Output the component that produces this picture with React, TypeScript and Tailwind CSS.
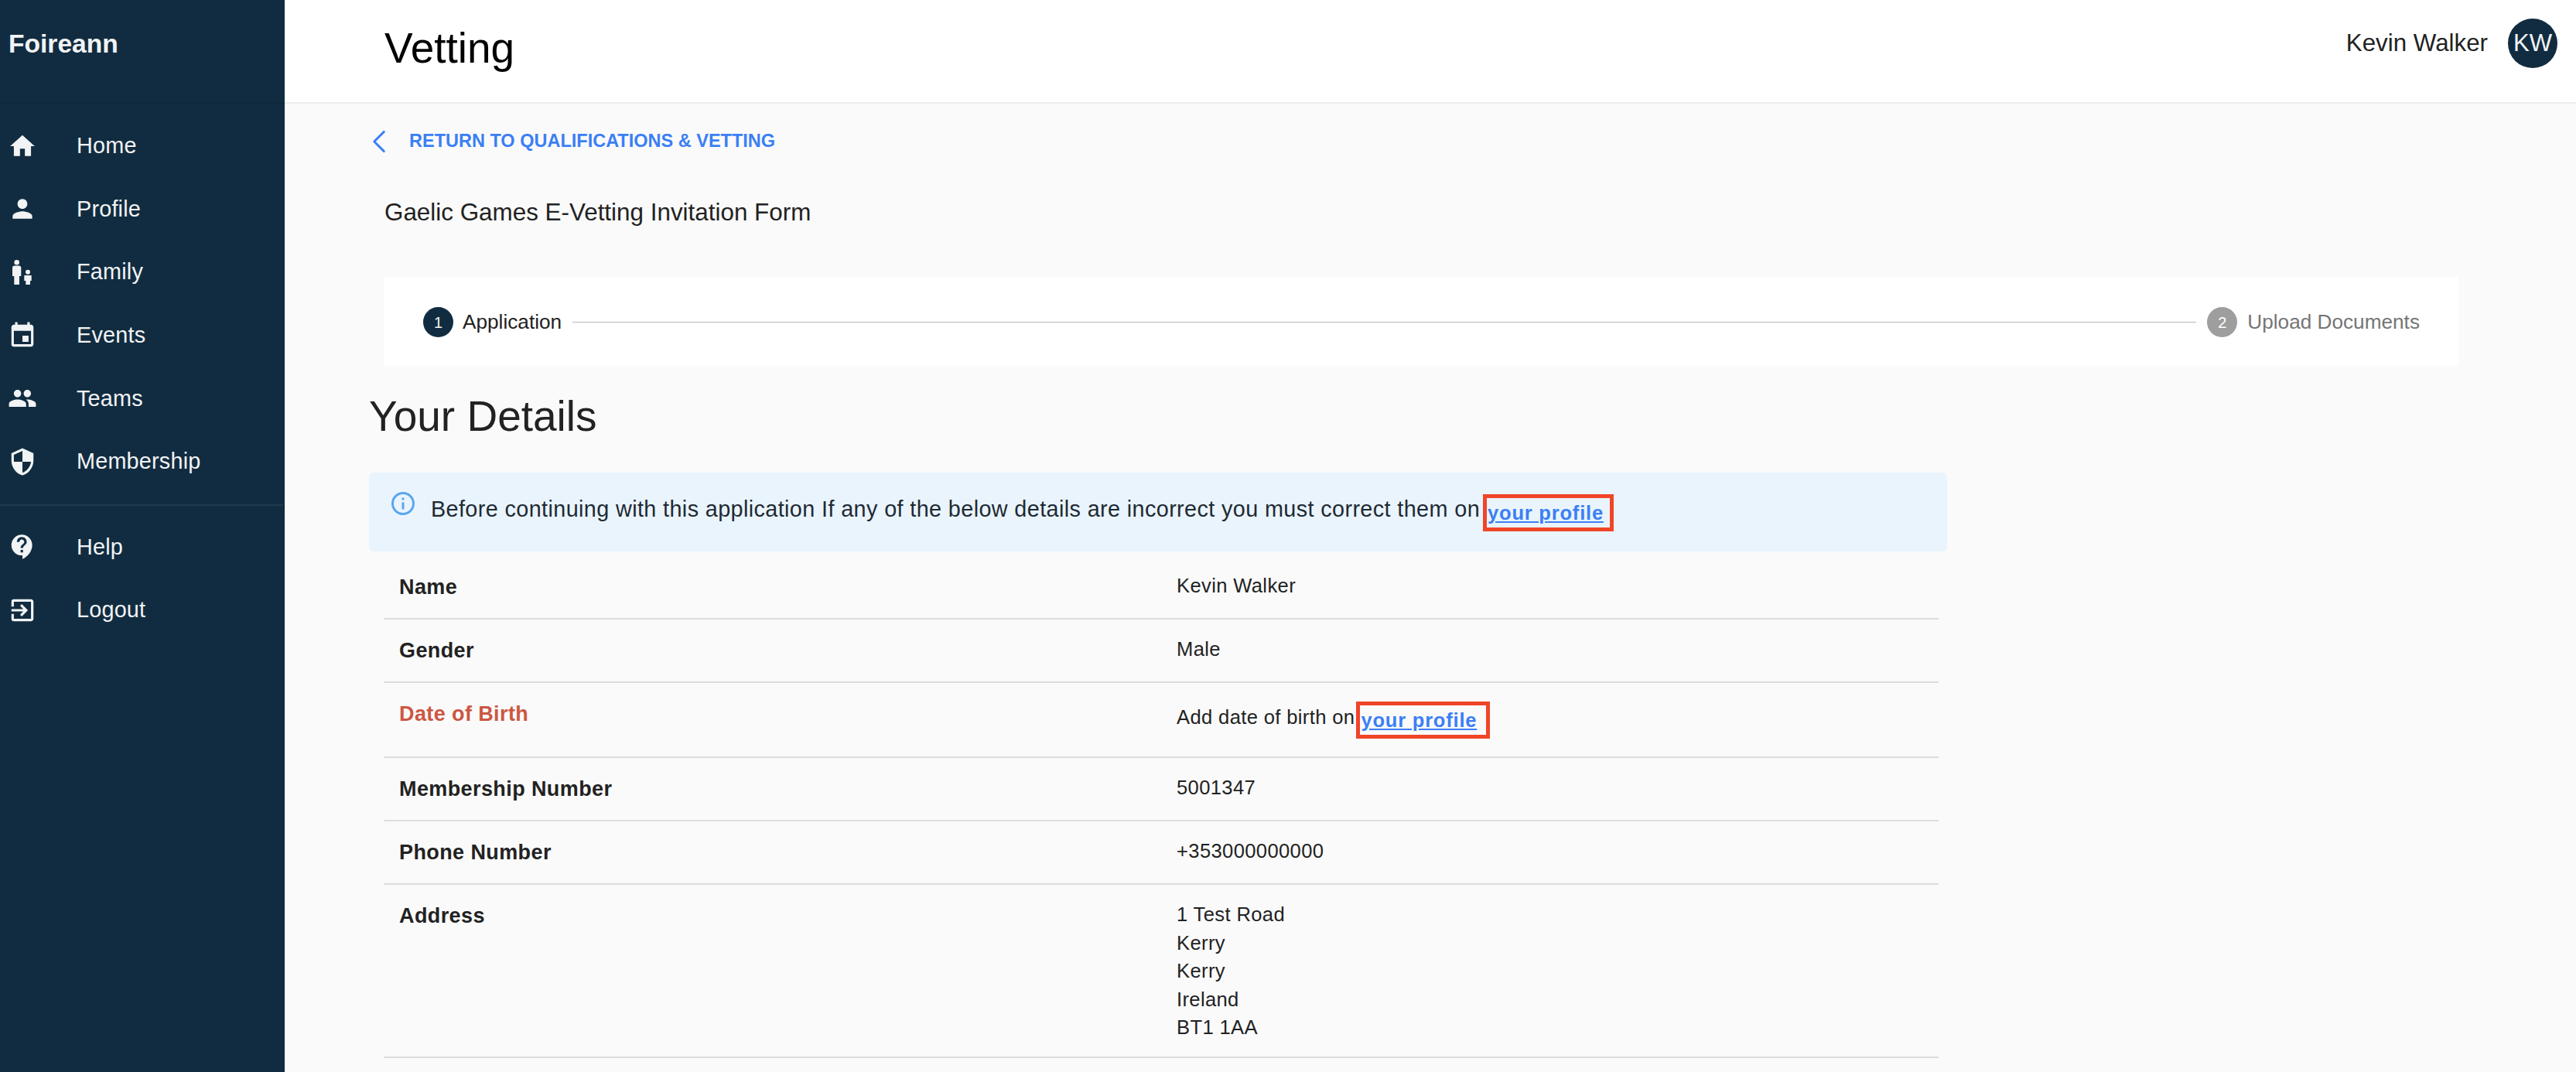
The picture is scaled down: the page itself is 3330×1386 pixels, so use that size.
import type { ComponentType, ReactNode } from "react";
import { ChevronLeft } from "lucide-react";
import {
  MdContactSupport,
  MdEvent,
  MdExitToApp,
  MdHome,
  MdInfoOutline,
  MdPeople,
  MdPerson,
  MdSecurity,
} from "react-icons/md";

function FamilyIcon({ className }: { className?: string }) {
  return (
    <svg viewBox="0 0 38 38" fill="currentColor" className={className}>
      <circle cx="11.7" cy="6.3" r="3.3" />
      <path d="M9 10.5h5.3a3 3 0 0 1 3 3V24H15v11H8.3V24H6V13.5a3 3 0 0 1 3-3z" />
      <circle cx="26" cy="18.7" r="3" />
      <path d="M21.3 23h9.4v7H29v5h-5.7v-5h-2z" />
    </svg>
  );
}

const mainNav = [
  { label: "Home", icon: MdHome },
  { label: "Profile", icon: MdPerson },
  { label: "Family", icon: FamilyIcon },
  { label: "Events", icon: MdEvent },
  { label: "Teams", icon: MdPeople },
  { label: "Membership", icon: MdSecurity },
];

const otherNav = [
  { label: "Help", icon: MdContactSupport },
  { label: "Logout", icon: MdExitToApp },
];

function NavItem({ label, icon: Icon }: { label: string; icon: ComponentType<{ className?: string }> }) {
  return (
    <div className="flex h-[81.6px] items-center pl-[10px] text-[28.8px] tracking-[0.2px] text-[#f1f3f5]">
      <Icon className="w-[38px] h-[38px] shrink-0" />
      <span className="ml-[51px]">{label}</span>
    </div>
  );
}

function ProfileLink({ className }: { className: string }) {
  return (
    <a className={`inline-block align-[-4px] border-[5px] border-[#f04528] pl-[1px] text-[#3b7ff5] font-bold text-[25.5px] leading-[38px] tracking-[0.8px] underline ${className}`}>
      your profile
    </a>
  );
}

function Row({ label, children, danger }: { label: string; children: ReactNode; danger?: boolean }) {
  return (
    <div className="grid grid-cols-[1005px_1fr] border-b-[2px] border-[#dddddd] pl-[20px] pb-[22px]">
      <div className={`pt-[22px] text-[27px] leading-[36px] font-bold tracking-[0.4px] ${danger ? "text-[#cd5642]" : "text-[#222222]"}`}>
        {label}
      </div>
      <div className="pt-[20px] text-[25.6px] leading-[36.5px] tracking-[0.35px] text-[#222222]">{children}</div>
    </div>
  );
}

export default function App() {
  return (
    <div className="flex h-[1386px] w-[3330px] overflow-hidden bg-[#fafafa] font-['Liberation_Sans',Arial,sans-serif]">
      <aside className="w-[368px] shrink-0 bg-[#112c40]">
        <div className="h-[134px] border-b border-[#0e2638] pl-[11px] pt-[33px] text-[33.6px] leading-[48px] font-bold text-[#f1f3f5]">
          Foireann
        </div>
        <nav className="pt-[14px]">
          {mainNav.map((item) => (
            <NavItem key={item.label} {...item} />
          ))}
        </nav>
        <div className="mt-[14px] mb-[13px] mr-[2px] border-b-[2px] border-[#20394d]" />
        {otherNav.map((item) => (
          <NavItem key={item.label} {...item} />
        ))}
      </aside>

      <main className="flex-1">
        <header className="flex h-[134px] justify-between border-b-[2px] border-[#eeeeee] bg-white pl-[129px] pr-[24px]">
          <h1 className="pt-[30px] text-[55px] leading-[64px] text-black">Vetting</h1>
          <div className="flex h-[112px] items-center gap-[26px]">
            <span className="text-[31.3px] text-[#222222]">Kevin Walker</span>
            <div className="flex h-[64px] w-[64px] items-center justify-center rounded-full bg-[#112c40] text-[31px] text-[#f1f3f5]">
              KW
            </div>
          </div>
        </header>

        <div className="pl-[109px]">
          <div className="mt-[24px] flex h-[50px] items-center text-[#3b7ff5]">
            <ChevronLeft className="ml-[-12px] h-[50px] w-[50px]" strokeWidth={1.5} />
            <span className="ml-[14px] text-[23.5px] font-bold">RETURN TO QUALIFICATIONS &amp; VETTING</span>
          </div>

          <h2 className="mt-[45px] ml-[20px] text-[31.4px] leading-[44px] text-[#222222]">Gaelic Games E-Vetting Invitation Form</h2>

          <div className="mt-[61px] ml-[19px] flex h-[115px] w-[2682px] items-center bg-white pl-[51px] pr-[50px] pt-[2px]">
            <div className="flex h-[39px] w-[39px] items-center justify-center rounded-full bg-[#112c40] text-[20px] text-[#f1f3f5]">1</div>
            <span className="ml-[12px] text-[26.2px] text-[#222222]">Application</span>
            <div className="mx-[14px] flex-1 border-t border-[#b8b8b8]" />
            <div className="flex h-[39px] w-[39px] items-center justify-center rounded-full bg-[#9e9e9e] text-[20px] text-white">2</div>
            <span className="ml-[13px] text-[26.2px] text-[#757575]">Upload Documents</span>
          </div>

          <h2 className="mt-[33px] text-[55px] leading-[64px] text-[#222222]">Your Details</h2>

          <div className="mt-[41px] flex h-[102px] w-[2040px] rounded-[6px] bg-[#e9f4fd] pl-[26px]">
            <MdInfoOutline className="mt-[22px] h-[36px] w-[36px] shrink-0 text-[#5aa6ee]" />
            <div className="ml-[18px] pt-[27px] text-[28.8px] leading-[40px] text-[#1f2a33] tracking-[0.38px]">
              Before continuing with this application If any of the below details are incorrect you must correct them on
              <ProfileLink className="ml-[4px] pr-[8px]" />
            </div>
          </div>

          <div className="ml-[19px] mt-[6px] w-[2010px]">
            <Row label="Name">Kevin Walker</Row>
            <Row label="Gender">Male</Row>
            <Row label="Date of Birth" danger>
              <div className="pt-[4px] pb-[1px]">
                Add date of birth on
                <ProfileLink className="ml-[2px] pr-[12px]" />
              </div>
            </Row>
            <Row label="Membership Number">5001347</Row>
            <Row label="Phone Number">+353000000000</Row>
            <Row label="Address">
              <div className="mb-[-3px]">
                1 Test Road
                <br />
                Kerry
                <br />
                Kerry
                <br />
                Ireland
                <br />
                BT1 1AA
              </div>
            </Row>
          </div>
        </div>
      </main>
    </div>
  );
}
